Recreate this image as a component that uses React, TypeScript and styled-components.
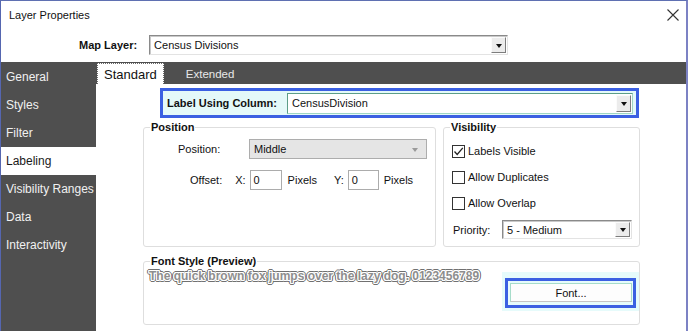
import React from 'react';
import styled, { createGlobalStyle, css } from 'styled-components';

const Global = createGlobalStyle`
  html, body { margin: 0; padding: 0; background: #fff; }
  body { font-family: "Liberation Sans", Arial, sans-serif; }
  * { box-sizing: border-box; }
`;

const Window = styled.div`
  width: 688px;
  height: 331px;
  border-top: 1px solid #5f70b2;
  border-left: 1px solid #5566b0;
  border-right: 2px solid #7c82c4;
  display: flex;
  flex-direction: column;
  background: #fff;
  overflow: hidden;
  font-family: "Liberation Sans", Arial, sans-serif;
  font-size: 11px;
  color: #1a1a1a;
`;

const TitleBar = styled.div`
  height: 29px;
  flex: none;
  display: flex;
  align-items: center;
  justify-content: space-between;
  padding: 0 7px 2px 8px;
`;

const TitleText = styled.span`
  font-size: 11px;
  color: #111;
`;

const CloseButton = styled.div`
  width: 12px;
  height: 12px;
  display: flex;
`;

const MapRow = styled.div`
  height: 32px;
  flex: none;
  display: flex;
  align-items: center;
  padding: 0 0 2px 78px;
`;

const BoldLabel = styled.span<{ $gap: number }>`
  font-weight: bold;
  font-size: 11px;
  color: #111;
  margin-right: ${(p) => p.$gap}px;
  white-space: nowrap;
`;

const Body = styled.div`
  flex: 1;
  display: flex;
  min-height: 0;
`;

const Sidebar = styled.div`
  width: 95px;
  flex: none;
  background: #4f4f4f;
  padding-top: 1px;
  display: flex;
  flex-direction: column;
`;

const NavItem = styled.div<{ $active?: boolean }>`
  height: 28px;
  display: flex;
  align-items: center;
  padding-left: 5px;
  font-size: 12px;
  color: ${(p) => (p.$active ? '#1a1a1a' : '#f1f1f1')};
  background: ${(p) => (p.$active ? '#ffffff' : 'transparent')};
  white-space: nowrap;
`;

const Main = styled.div`
  flex: 1;
  display: flex;
  flex-direction: column;
  min-width: 0;
`;

const TabBar = styled.div`
  height: 22px;
  flex: none;
  background: #4f4f4f;
  display: flex;
  align-items: flex-start;
  padding: 1px 0 0 1px;
`;

const Tab = styled.div<{ $active?: boolean }>`
  height: 21px;
  display: flex;
  align-items: center;
  white-space: nowrap;
  ${(p) =>
    p.$active
      ? css`
          background: #fff;
          border: 1px dotted #6a6a6a;
          border-bottom: none;
          padding: 0 6px;
          font-size: 13px;
          color: #111;
        `
      : css`
          margin-left: 16px;
          padding: 0 6px;
          font-size: 11.5px;
          color: #e8e8e8;
        `}
`;

const Content = styled.div`
  flex: 1;
  padding-left: 47px;
  display: flex;
  flex-direction: column;
  align-items: flex-start;
`;

const ColumnBox = styled.div`
  margin: 4px 0 0 17px;
  width: 479px;
  height: 30px;
  border: 3px solid #3b60e2;
  background: #e4f9f9;
  display: flex;
  align-items: center;
  padding: 0 3px 0 4px;
`;

type Variant = 'sunken' | 'focus' | 'disabled';

const SelectBox = styled.div<{ $w?: number; $h: number; $variant: Variant }>`
  ${(p) => (p.$w ? `width: ${p.$w}px;` : 'flex: 1;')}
  height: ${(p) => p.$h}px;
  display: flex;
  align-items: center;
  justify-content: space-between;
  padding-left: 4px;
  font-size: 11px;
  color: #111;
  ${(p) =>
    p.$variant === 'disabled'
      ? css`
          background: #e5e5e5;
          border: 1px solid #adadad;
        `
      : p.$variant === 'focus'
      ? css`
          background: #fff;
          border: 1px solid;
          border-color: #5c9d88 #9fd6c4 #9fd6c4 #5c9d88;
        `
      : css`
          background: #fff;
          border: 1px solid;
          border-color: #8a8a8a #e3e3e3 #e3e3e3 #8a8a8a;
          box-shadow: inset 1px 1px 0 #c9c9c9;
        `}
`;

const DropButton = styled.div`
  width: 15px;
  align-self: stretch;
  margin: 1px 1px 1px 0;
  background: #ececec;
  border: 1px solid;
  border-color: #fbfbfb #7d7d7d #7d7d7d #fbfbfb;
  display: flex;
  align-items: center;
  justify-content: center;
`;

const Triangle = styled.span<{ $light?: boolean }>`
  width: 0;
  height: 0;
  border-left: 3.5px solid transparent;
  border-right: 3.5px solid transparent;
  border-top: 4px solid ${(p) => (p.$light ? '#9a9a9a' : '#111')};
  margin-top: 1px;
`;

const LightArrow = styled.div`
  width: 16px;
  display: flex;
  justify-content: center;
  margin-right: 3px;
`;

const GroupsRow = styled.div`
  margin-top: 2px;
  display: flex;
  gap: 7px;
`;

const Group = styled.fieldset<{ $w: number; $h: number; $top?: number }>`
  margin: ${(p) => p.$top ?? 0}px 0 0 0;
  padding: 0;
  width: ${(p) => p.$w}px;
  height: ${(p) => p.$h}px;
  border: 1px solid #dedede;
  border-radius: 3px;
  min-width: 0;
  display: flex;
  flex-direction: column;
`;

const Legend = styled.legend`
  padding: 0 1px;
  margin-left: 6px;
  font-weight: bold;
  font-size: 11px;
  line-height: 14px;
  color: #111;
`;

const FieldRow = styled.div<{ $top: number; $left: number }>`
  display: flex;
  align-items: center;
  margin-top: ${(p) => p.$top}px;
  padding-left: ${(p) => p.$left}px;
`;

const Text = styled.span<{ $w?: number; $ml?: number }>`
  font-size: 11px;
  color: #111;
  white-space: nowrap;
  ${(p) => (p.$w ? `width: ${p.$w}px;` : '')}
  margin-left: ${(p) => p.$ml ?? 0}px;
`;

const TextInput = styled.div<{ $w: number; $ml: number }>`
  width: ${(p) => p.$w}px;
  height: 20px;
  margin-left: ${(p) => p.$ml}px;
  border: 1px solid #acacac;
  background: #fff;
  display: flex;
  align-items: center;
  padding-left: 3px;
  font-size: 11px;
  color: #111;
`;

const CheckRow = styled.div<{ $top?: number }>`
  height: 26px;
  display: flex;
  align-items: center;
  padding-left: 8px;
  margin-top: ${(p) => p.$top ?? 0}px;
`;

const CheckBox = styled.div`
  width: 13px;
  height: 13px;
  border: 1px solid #333;
  background: #fff;
  margin-right: 3px;
  display: flex;
`;

const FontGroupBody = styled.div`
  display: flex;
  justify-content: space-between;
  align-items: flex-start;
`;

const Preview = styled.div`
  margin: 1px 0 0 5px;
  font-family: "Liberation Sans", Arial, sans-serif;
  font-weight: bold;
  font-size: 12px;
  line-height: 14px;
  color: #8e8e8e;
  text-shadow: 1px 0 0 #fff, -1px 0 0 #fff, 0 1px 0 #fff, 0 -1px 0 #fff,
    1px 1px 0 #fff, -1px -1px 0 #fff, 1px -1px 0 #fff, -1px 1px 0 #fff,
    2px 0 0 #707070, -2px 0 0 #707070, 0 2px 0 #707070, 0 -2px 0 #707070,
    2px 1px 0 #707070, -2px -1px 0 #707070, 1px 2px 0 #707070, -1px -2px 0 #707070,
    2px -1px 0 #707070, -2px 1px 0 #707070, 1px -2px 0 #707070, -1px 2px 0 #707070;
  white-space: nowrap;
`;

const ButtonHalo = styled.div`
  margin-top: 4px;
  width: 137px;
  height: 39px;
  background: #e6fbfb;
  padding: 6px 3px 3px 3px;
  display: flex;
`;

const ButtonFrame = styled.div`
  flex: 1;
  border: 3px solid #3b60e2;
  display: flex;
  padding: 2px 1px 3px 2px;
`;

const PushButton = styled.div`
  flex: 1;
  background: #fdfdfd;
  border: 1px solid;
  border-color: #a6dcca #a6dcca #c4c4c4 #a6dcca;
  display: flex;
  align-items: center;
  justify-content: center;
  font-size: 11px;
  color: #111;
`;

const navItems = ['General', 'Styles', 'Filter', 'Labeling', 'Visibility Ranges', 'Data', 'Interactivity'];

const Select: React.FC<{ value: string; w?: number; h: number; variant: Variant }> = ({ value, w, h, variant }) => (
  <SelectBox $w={w} $h={h} $variant={variant}>
    <span>{value}</span>
    {variant === 'disabled' ? (
      <LightArrow>
        <Triangle $light />
      </LightArrow>
    ) : (
      <DropButton>
        <Triangle />
      </DropButton>
    )}
  </SelectBox>
);

const Check: React.FC<{ checked?: boolean; label: string; top?: number }> = ({ checked, label, top }) => (
  <CheckRow $top={top}>
    <CheckBox>
      {checked && (
        <svg width="11" height="11" viewBox="0 0 11 11">
          <polyline points="1.5,5.5 4.2,8.5 9.8,1.8" fill="none" stroke="#222" strokeWidth="1.3" />
        </svg>
      )}
    </CheckBox>
    <Text>{label}</Text>
  </CheckRow>
);

export default function App() {
  return (
    <>
      <Global />
      <Window>
        <TitleBar>
          <TitleText>Layer Properties</TitleText>
          <CloseButton>
            <svg width="12" height="12" viewBox="0 0 12 12">
              <path d="M0.5 0.5 L11.5 11.5 M11.5 0.5 L0.5 11.5" stroke="#333" strokeWidth="1.1" />
            </svg>
          </CloseButton>
        </TitleBar>
        <MapRow>
          <BoldLabel $gap={12}>Map Layer:</BoldLabel>
          <Select value="Census Divisions" w={359} h={20} variant="sunken" />
        </MapRow>
        <Body>
          <Sidebar>
            {navItems.map((n) => (
              <NavItem key={n} $active={n === 'Labeling'}>
                {n}
              </NavItem>
            ))}
          </Sidebar>
          <Main>
            <TabBar>
              <Tab $active>Standard</Tab>
              <Tab>Extended</Tab>
            </TabBar>
            <Content>
              <ColumnBox>
                <BoldLabel $gap={10}>Label Using Column:</BoldLabel>
                <Select value="CensusDivision" h={21} variant="focus" />
              </ColumnBox>
              <GroupsRow>
                <Group $w={293} $h={127}>
                  <Legend>Position</Legend>
                  <FieldRow $top={5} $left={34}>
                    <Text $w={71}>Position:</Text>
                    <Select value="Middle" w={178} h={20} variant="disabled" />
                  </FieldRow>
                  <FieldRow $top={11} $left={46}>
                    <Text>Offset:</Text>
                    <Text $ml={13}>X:</Text>
                    <TextInput $w={32} $ml={4}>0</TextInput>
                    <Text $ml={6}>Pixels</Text>
                    <Text $ml={17}>Y:</Text>
                    <TextInput $w={31} $ml={4}>0</TextInput>
                    <Text $ml={5}>Pixels</Text>
                  </FieldRow>
                </Group>
                <Group $w={197} $h={127}>
                  <Legend>Visibility</Legend>
                  <Check checked label="Labels Visible" top={4} />
                  <Check label="Allow Duplicates" />
                  <Check label="Allow Overlap" />
                  <FieldRow $top={4} $left={9}>
                    <Text $w={49}>Priority:</Text>
                    <Select value="5 - Medium" w={130} h={19} variant="sunken" />
                  </FieldRow>
                </Group>
              </GroupsRow>
              <Group $w={497} $h={71} $top={7}>
                <Legend>Font Style (Preview)</Legend>
                <FontGroupBody>
                  <Preview>The quick brown fox jumps over the lazy dog. 0123456789</Preview>
                  <ButtonHalo>
                    <ButtonFrame>
                      <PushButton>Font...</PushButton>
                    </ButtonFrame>
                  </ButtonHalo>
                </FontGroupBody>
              </Group>
            </Content>
          </Main>
        </Body>
      </Window>
    </>
  );
}
